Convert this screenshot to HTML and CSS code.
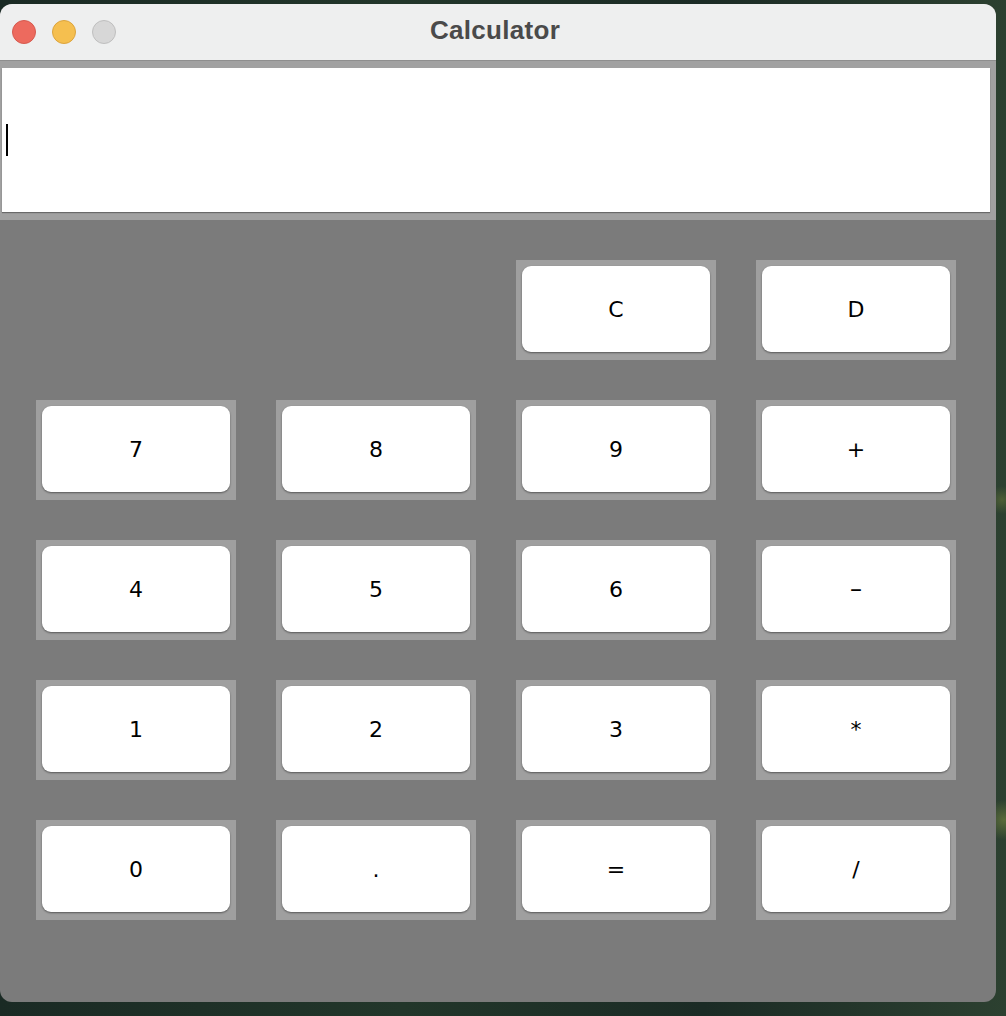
FILE: index.html
```html
<!DOCTYPE html>
<html>
<head>
<meta charset="utf-8">
<title>Calculator</title>
<link rel="stylesheet" href="styles.css">
</head>
<body>
<div class="window">
  <div class="titlebar">
    <div class="lights">
      <span class="light red"></span>
      <span class="light yellow"></span>
      <span class="light gray"></span>
    </div>
    <div class="title">Calculator</div>
    <div></div>
  </div>
  <div class="display-wrap">
    <div class="display"><span class="caret"></span></div>
  </div>
  <div class="keypad">
    <div class="cell"></div>
    <div class="cell"></div>
    <div class="key"><span>C</span></div>
    <div class="key"><span>D</span></div>
    <div class="key"><span>7</span></div>
    <div class="key"><span>8</span></div>
    <div class="key"><span>9</span></div>
    <div class="key"><span>+</span></div>
    <div class="key"><span>4</span></div>
    <div class="key"><span>5</span></div>
    <div class="key"><span>6</span></div>
    <div class="key"><span class="minus">–</span></div>
    <div class="key"><span>1</span></div>
    <div class="key"><span>2</span></div>
    <div class="key"><span>3</span></div>
    <div class="key"><span>*</span></div>
    <div class="key"><span>0</span></div>
    <div class="key"><span>.</span></div>
    <div class="key"><span>=</span></div>
    <div class="key"><span>/</span></div>
  </div>
</div>
</body>
</html>
```
FILE: styles.css
```css
html, body {
  margin: 0;
  padding: 0;
}
body {
  width: 1006px;
  height: 1016px;
  overflow: hidden;
  background:
    radial-gradient(circle at 1002px 500px, #4d5e35 0, rgba(77,94,53,0) 14px),
    radial-gradient(circle at 1004px 820px, #5a6b3a 0, rgba(90,107,58,0) 20px),
    linear-gradient(90deg, #1a2a24, #22362a 40%, #1b2b25 70%, #2c4030);
  padding-top: 4px;
  box-sizing: border-box;
}
.window {
  width: 996px;
  height: 998px;
  border-radius: 12px;
  overflow: hidden;
  background: #7b7b7b;
  display: flex;
  flex-direction: column;
}
.titlebar {
  height: 56px;
  background: #eeefef;
  border-bottom: 1px solid #8e8e8e;
  display: grid;
  grid-template-columns: 1fr auto 1fr;
  align-items: center;
  flex: none;
}
.lights {
  display: flex;
  gap: 16px;
  padding-left: 12px;
}
.light {
  width: 24px;
  height: 24px;
  border-radius: 50%;
  box-sizing: border-box;
}
.red { background: #ed6a5e; border: 1px solid #d65a4f; }
.yellow { background: #f5bf4f; border: 1px solid #dca43d; }
.gray { background: #d7d7d7; border: 1px solid #bfbfbf; }
.title {
  font-family: "Liberation Sans", Arial, sans-serif;
  font-weight: bold;
  font-size: 26px;
  letter-spacing: 0.3px;
  color: #4a4a4a;
  transform: translate(-3px, -2px);
}
.display-wrap {
  background: #a1a1a1;
  padding: 7px 6px 8px 2px;
  flex: none;
}
.display {
  height: 144px;
  background: #ffffff;
  display: flex;
  align-items: center;
  box-shadow: 0 1px 1px rgba(0,0,0,0.35);
}
.caret {
  width: 2px;
  height: 32px;
  background: #000;
  margin-left: 4px;
}
.keypad {
  display: grid;
  grid-template-columns: repeat(4, 200px);
  grid-auto-rows: 100px;
  column-gap: 40px;
  row-gap: 40px;
  padding: 40px 0 0 36px;
}
.key {
  background: #9f9f9f;
  padding: 6px 6px 8px 6px;
  box-sizing: border-box;
  display: flex;
}
.key span {
  flex: 1;
  background: #ffffff;
  border-radius: 9px;
  box-shadow: 0 1px 2px rgba(0,0,0,0.45);
  display: flex;
  align-items: center;
  justify-content: center;
  font-family: "DejaVu Sans", "Liberation Sans", sans-serif;
  font-size: 22px;
  color: #000;
}
.key .minus {
  font-size: 24px;
}
```
